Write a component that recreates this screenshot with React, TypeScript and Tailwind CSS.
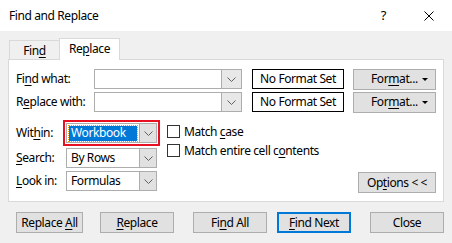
import type React from 'react'

const U = ({ children }: { children: React.ReactNode }) => <span className="underline underline-offset-2">{children}</span>

const Chevron = () => (
  <svg width="9" height="5" viewBox="0 0 9 5" className="block">
    <polyline points="0.5,0.5 4.5,4.5 8.5,0.5" fill="none" stroke="#606060" strokeWidth="1" />
  </svg>
)

const Triangle = () => (
  <svg width="6" height="3" viewBox="0 0 6 3" className="block">
    <polygon points="0,0 6,0 3,3" fill="#000" />
  </svg>
)

const EditCombo = ({ w }: { w: string }) => (
  <div className={`flex h-full ${w} border border-[#adadad] bg-white`}>
    <div className="flex-1" />
    <div className="flex w-[20px] items-center justify-center border-l border-[#adadad] bg-[#e8e8e8]">
      <Chevron />
    </div>
  </div>
)

const Select = ({ value, selected }: { value: string; selected?: boolean }) => (
  <div className="flex h-[20px] w-[91px] border border-[#adadad] bg-white">
    <div className="flex flex-1 items-center px-[2px]">
      {selected ? (
        <span className="flex h-[15px] flex-1 items-center bg-[#0078d7] pl-[2px] text-white outline-1 outline-dotted outline-[#f0a000]">
          {value}
        </span>
      ) : (
        <span className="pl-[2px]">{value}</span>
      )}
    </div>
    <div className="flex w-[17px] items-center justify-center border-l border-[#adadad] bg-[#e1e1e1]">
      <Chevron />
    </div>
  </div>
)

const Button = ({ children, w, primary }: { children: React.ReactNode; w: string; primary?: boolean }) => (
  <div
    className={`flex h-[21px] ${w} items-center justify-center bg-[#e1e1e1] ${
      primary ? 'border-2 border-[#0078d7]' : 'border border-[#adadad]'
    }`}
  >
    {children}
  </div>
)

const Check = ({ children }: { children: React.ReactNode }) => (
  <div className="flex h-[13px] items-center">
    <div className="h-[13px] w-[13px] border border-[#333] bg-white" />
    <span className="ml-[4px]">{children}</span>
  </div>
)

export default function App() {
  return (
    <div
      className="h-[243px] w-[452px] overflow-hidden bg-[#f0f0f0] text-[12px] leading-none tracking-[-0.4px] text-black"
      style={{ fontFamily: '"Segoe UI", "Noto Sans", sans-serif' }}
    >
      <div className="flex h-[31px] items-center bg-white pl-[9px]">
        <span className="text-[12px]">Find and Replace</span>
        <span className="ml-auto mr-[38px] text-[13px]">?</span>
        <svg width="10" height="10" viewBox="0 0 10 10" className="mr-[18px]">
          <path d="M0.5 0.5 L9.5 9.5 M9.5 0.5 L0.5 9.5" stroke="#000" strokeWidth="1" />
        </svg>
      </div>

      <div className="flex h-[28px] items-end pl-[9px]">
        <div className="flex h-[19px] w-[51px] items-center justify-center border border-b-0 border-[#d9d9d9] bg-[#f0f0f0] pt-[2px]">
          <span>
            Fin<U>d</U>
          </span>
        </div>
        <div className="relative z-10 -mb-px -ml-px flex h-[22px] w-[61px] items-center justify-center border border-b-0 border-[#d9d9d9] bg-white pb-[2px]">
          <span>
            Re<U>p</U>lace
          </span>
        </div>
      </div>

      <div className="mx-[8px] h-[143px] border border-[#d9d9d9] bg-white pl-[7px]">
        <div className="mt-[9px] flex h-[20px] items-center">
          <div className="w-[78px]">
            Fi<U>n</U>d what:
          </div>
          <EditCombo w="w-[148px]" />
          <div className="ml-[10px] flex h-full w-[92px] items-center justify-center border border-black">No Format Set</div>
          <div className="ml-[9px]">
            <Button w="w-[83px]">
              <span className="ml-[17px]">
                For<U>m</U>at...
              </span>
              <span className="ml-auto mr-[7px]">
                <Triangle />
              </span>
            </Button>
          </div>
        </div>

        <div className="mt-[3px] flex h-[20px] items-center">
          <div className="w-[78px]">
            R<U>e</U>place with:
          </div>
          <EditCombo w="w-[148px]" />
          <div className="ml-[10px] flex h-full w-[92px] items-center justify-center border border-black">No Format Set</div>
          <div className="ml-[9px]">
            <Button w="w-[83px]">
              <span className="ml-[17px]">
                For<U>m</U>at...
              </span>
              <span className="ml-auto mr-[7px]">
                <Triangle />
              </span>
            </Button>
          </div>
        </div>

        <div className="mt-[8px] flex">
          <div className="flex flex-col">
            <div className="flex h-[26px] items-center">
              <div className="w-[47px]">
                Wit<U>h</U>in:
              </div>
              <div className="border-2 border-[#e81123] p-px">
                <Select value="Workbook" selected />
              </div>
            </div>
            <div className="mt-[2px] flex h-[20px] items-center">
              <div className="w-[50px]">
                <U>S</U>earch:
              </div>
              <Select value="By Rows" />
            </div>
            <div className="mt-[3px] flex h-[20px] items-center">
              <div className="w-[50px]">
                <U>L</U>ook in:
              </div>
              <Select value="Formulas" />
            </div>
          </div>

          <div className="ml-[7px] mt-[5px] flex flex-col gap-[6px]">
            <Check>
              Match <U>c</U>ase
            </Check>
            <Check>
              Match entire cell c<U>o</U>ntents
            </Check>
          </div>

          <div className="ml-auto mr-[7px] mt-[52px]">
            <Button w="w-[78px]">
              <span>
                Op<U>t</U>ions &lt; &lt;
              </span>
            </Button>
          </div>
        </div>
      </div>

      <div className="mt-[10px] flex pl-[16px]">
        <Button w="w-[67px]">
          <span>
            Replace <U>A</U>ll
          </span>
        </Button>
        <div className="ml-[17px]">
          <Button w="w-[74px]">
            <span>
              <U>R</U>eplace
            </span>
          </Button>
        </div>
        <div className="ml-[19px]">
          <Button w="w-[74px]">
            <span>
              Fi<U>n</U>d All
            </span>
          </Button>
        </div>
        <div className="ml-[10px]">
          <Button w="w-[74px]" primary>
            <span>
              <U>F</U>ind Next
            </span>
          </Button>
        </div>
        <div className="ml-[19px]">
          <Button w="w-[74px]">Close</Button>
        </div>
      </div>
    </div>
  )
}
